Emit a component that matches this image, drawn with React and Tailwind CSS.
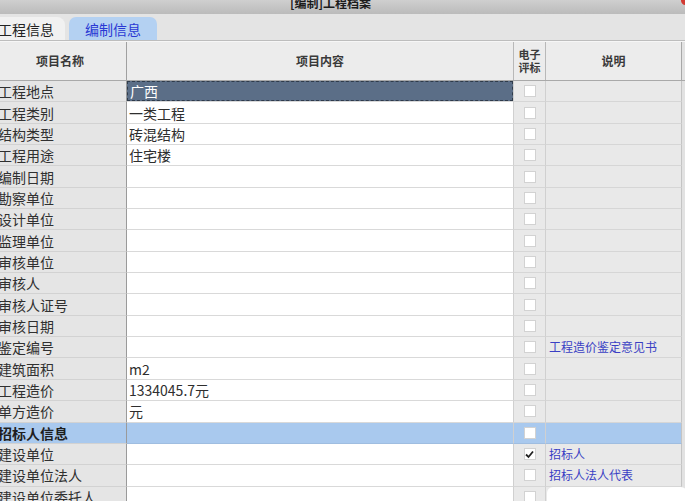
import React from 'react';

const rows = [
  { name: '工程地点', value: '广西', selected: true },
  { name: '工程类别', value: '一类工程' },
  { name: '结构类型', value: '砖混结构' },
  { name: '工程用途', value: '住宅楼' },
  { name: '编制日期' },
  { name: '勘察单位' },
  { name: '设计单位' },
  { name: '监理单位' },
  { name: '审核单位' },
  { name: '审核人' },
  { name: '审核人证号' },
  { name: '审核日期' },
  { name: '鉴定编号', note: '工程造价鉴定意见书' },
  { name: '建筑面积', value: 'm2' },
  { name: '工程造价', value: '1334045.7元' },
  { name: '单方造价', value: '元' },
  { name: '招标人信息', group: true },
  { name: '建设单位', note: '招标人', checked: true },
  { name: '建设单位法人', note: '招标人法人代表' },
  { name: '建设单位委托人' },
];

const font = { fontFamily: '"Noto Sans CJK SC", "Noto Sans", sans-serif' };

function Checkbox({ checked }) {
  return (
    <div className="w-[12px] h-[12px] bg-white border border-[#d2d2d2] flex items-center justify-center">
      {checked && (
        <svg width="9" height="9" viewBox="0 0 9 9">
          <path d="M1 4.5 L3.5 7 L8 1.5" stroke="#222" strokeWidth="1.8" fill="none" />
        </svg>
      )}
    </div>
  );
}

function Row({ row }) {
  const g = row.group;
  return (
    <div className={`grid grid-cols-[127px_387px_32px_136px_1fr] h-[21.35px] ${g ? 'bg-[#a9c9ee]' : ''}`}>
      <div className={`border-r border-r-[#9a9a9a] border-b border-b-[#d2d2d2] flex items-center overflow-hidden ${g ? 'border-b-[#9fbde0]' : 'bg-[#e5e5e5]'}`}>
        <span className={`-ml-[2px] text-[14px] leading-none whitespace-nowrap ${g ? 'font-bold text-[#1e1e1e]' : 'text-[#303030]'}`}>{row.name}</span>
      </div>
      <div className={`border-r border-r-[#d0d0d0] border-b flex items-center ${g ? 'border-b-[#9fbde0]' : 'bg-white border-b-[#d9d9d9]'}`}>
        {row.selected ? (
          <div className="h-full w-full bg-[#5b6e87] border border-dashed border-[#2f3b4a] flex items-center pl-[2px]">
            <span className="text-[14px] leading-none text-white">{row.value}</span>
          </div>
        ) : (
          <span className="pl-[2px] text-[14px] leading-none text-[#2e2e2e] whitespace-nowrap">{row.value}</span>
        )}
      </div>
      <div className={`border-r border-r-[#d0d0d0] border-b flex items-center justify-center ${g ? 'border-b-[#9fbde0]' : 'bg-[#e9e9e9] border-b-[#d6d6d6]'}`}>
        <Checkbox checked={row.checked} />
      </div>
      <div className={`border-r border-r-[#c4c4c4] border-b flex items-center overflow-hidden ${g ? 'border-b-[#9fbde0]' : 'bg-[#e9e9e9] border-b-[#d6d6d6]'}`}>
        {row.note && (
          <span className="pl-[3px] text-[12px] leading-none text-[#3a3fc4] whitespace-nowrap">{row.note}</span>
        )}
      </div>
      <div className="bg-[#e2e2e2]" />
    </div>
  );
}

export default function App() {
  return (
    <div className="w-[685px] h-[501px] overflow-hidden bg-[#e3e3e3] relative flex flex-col" style={font}>
      {/* title bar */}
      <div className="h-[14px] shrink-0 bg-gradient-to-b from-[#cfcfcf] to-[#bbbbbb] flex items-end justify-center pr-[24px] overflow-hidden">
        <span className="text-[12px] font-bold leading-none text-[#1c1c1c] mb-[5px]">[编制]工程档案</span>
      </div>
      <div className="absolute top-[-4px] right-[-5px] w-[9px] h-[9px] rounded-full bg-[#d23a32]" />

      {/* tabs */}
      <div className="h-[27px] shrink-0 bg-[#e4e4e4] flex items-end border-b border-b-[#bdbdbd]">
        <div className="h-[23px] w-[66px] bg-[#f1f1f1] rounded-tr-[8px] flex items-center -ml-[1px]">
          <span className="text-[14px] leading-none text-[#222] -ml-[1px]">工程信息</span>
        </div>
        <div className="h-[23px] w-[88px] ml-[4px] bg-[#b4d1f2] rounded-t-[7px] flex items-center justify-center">
          <span className="text-[14px] leading-none text-[#2a38d4]">编制信息</span>
        </div>
      </div>

      {/* header */}
      <div className="grid grid-cols-[127px_387px_32px_136px_1fr] h-[40px] shrink-0 bg-[#ececec] border-b border-b-[#a9a9a9] border-t border-t-[#f6f6f6]">
        <div className="border-r border-r-[#a0a0a0] flex items-center justify-center pr-[6px]">
          <span className="text-[12px] font-semibold text-[#3a3a3a]">项目名称</span>
        </div>
        <div className="border-r border-r-[#b8b8b8] flex items-center justify-center">
          <span className="text-[12px] font-semibold text-[#3a3a3a]">项目内容</span>
        </div>
        <div className="border-r border-r-[#b8b8b8] flex flex-col items-center justify-center">
          <span className="text-[11px] font-semibold leading-[13px] text-[#3a3a3a]">电子</span>
          <span className="text-[11px] font-semibold leading-[13px] text-[#3a3a3a]">评标</span>
        </div>
        <div className="border-r border-r-[#a8a8a8] flex items-center justify-center">
          <span className="text-[12px] font-semibold text-[#3a3a3a]">说明</span>
        </div>
        <div className="bg-[#e2e2e2]" />
      </div>

      {/* body */}
      <div className="flex flex-col">
        {rows.map((r) => (
          <Row key={r.name} row={r} />
        ))}
      </div>

      <div className="absolute left-[547px] top-[487px] w-[140px] h-[20px] bg-white rounded-[6px]" />
    </div>
  );
}
